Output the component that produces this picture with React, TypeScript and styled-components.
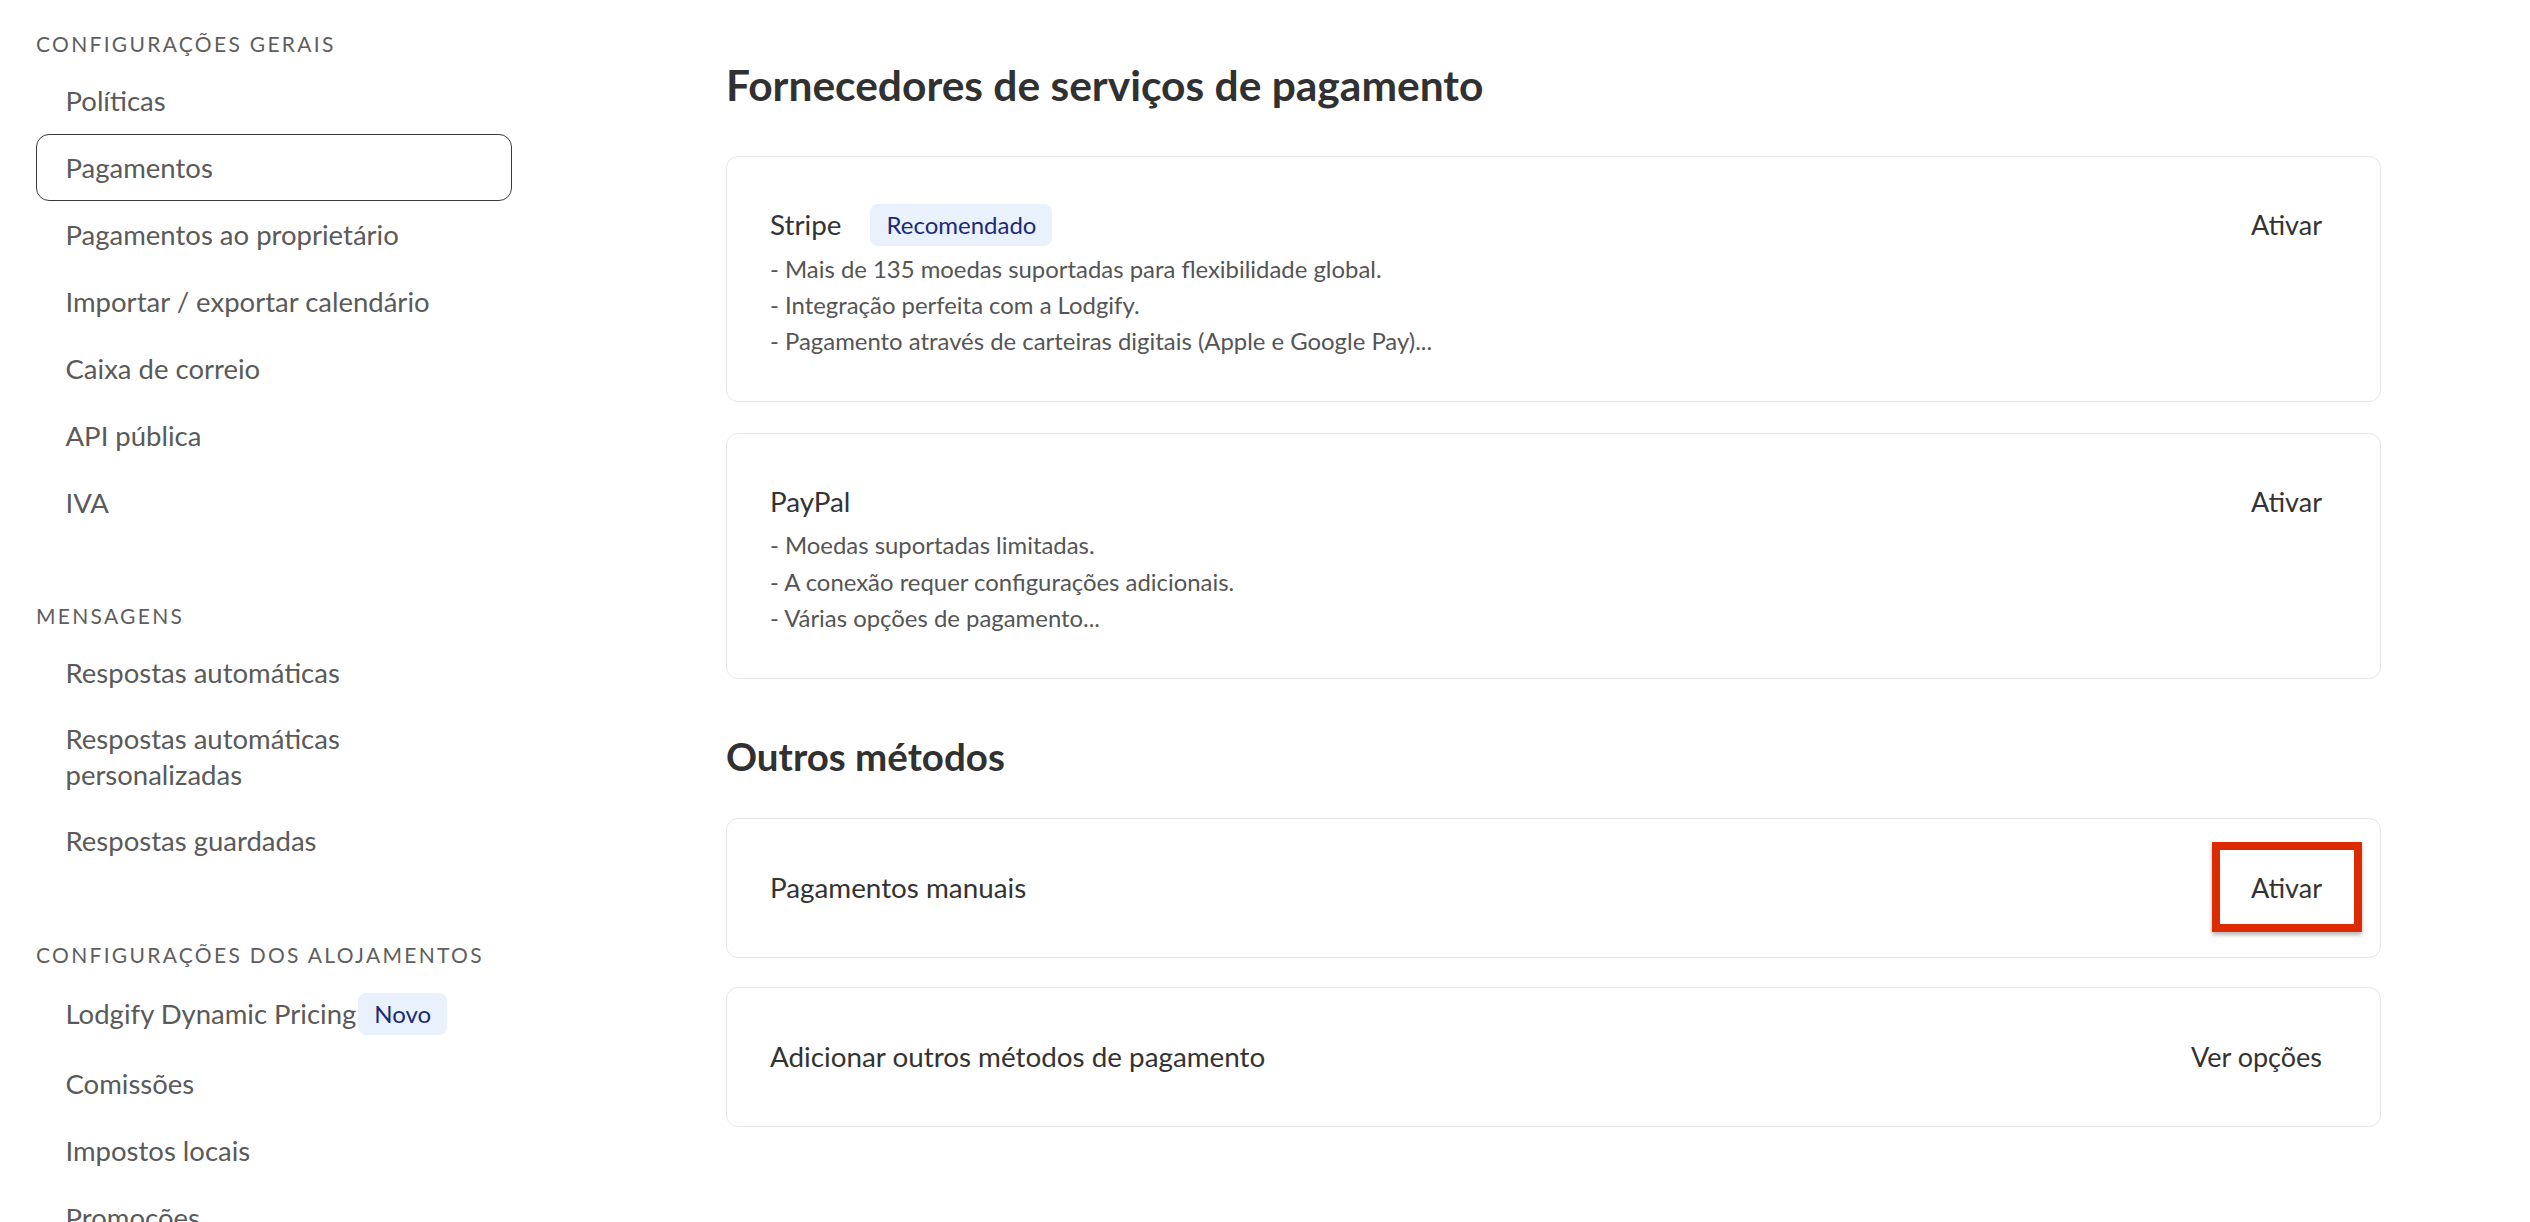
import React from "react";
import styled, { createGlobalStyle } from "styled-components";

const GlobalStyle = createGlobalStyle`
  html, body { margin: 0; padding: 0; background: #ffffff; }
  body {
    font-family: Lato, "Open Sans", "Liberation Sans", sans-serif;
    -webkit-font-smoothing: antialiased;
    overflow: hidden;
  }
  * { box-sizing: border-box; }
`;

const Page = styled.div`
  display: flex;
  align-items: flex-start;
  width: 2530px;
  height: 1222px;
  overflow: hidden;
  padding-left: 36px;
`;

const Sidebar = styled.nav`
  width: 476px;
  flex-shrink: 0;
  display: flex;
  flex-direction: column;
  padding-top: 30px;
`;

const Group = styled.div`
  display: flex;
  flex-direction: column;
  & + & {
    margin-top: 66px;
  }
`;

const GroupLabel = styled.div`
  font-size: 21px;
  line-height: 28px;
  letter-spacing: 2.3px;
  text-transform: uppercase;
  color: #5e5e5e;
  margin-bottom: 9px;
`;

const NavItem = styled.a<{ $active?: boolean }>`
  display: flex;
  align-items: center;
  gap: 2px;
  padding: 14.25px 28.5px;
  min-height: 67px;
  font-size: 27.5px;
  line-height: 35.5px;
  color: #5a5a5a;
  text-decoration: none;
  border: 1.5px solid ${(p) => (p.$active ? "#3a3a3a" : "transparent")};
  border-radius: 13px;
  cursor: pointer;
`;

const NavText = styled.span`
  min-width: 0;
`;

const Badge = styled.span`
  display: inline-flex;
  align-items: center;
  flex-shrink: 0;
  height: 42px;
  padding: 0 16px;
  border-radius: 8px;
  background: #e9f1fd;
  color: #1c2a78;
  font-size: 24px;
  line-height: 42px;
  white-space: nowrap;
`;

const Main = styled.main`
  margin-left: 214px;
  width: 1655px;
  flex-shrink: 0;
  display: flex;
  flex-direction: column;
  padding-top: 60px;
`;

const SectionTitle = styled.h2<{ $spaced?: boolean }>`
  margin: ${(p) => (p.$spaced ? "52px 0 37px" : "0 0 46px")};
  font-size: ${(p) => (p.$spaced ? "38.5px" : "42.5px")};
  line-height: 50px;
  font-weight: 700;
  color: #313131;
`;

const CardList = styled.div<{ $gap: number }>`
  display: flex;
  flex-direction: column;
  gap: ${(p) => p.$gap}px;
`;

const Card = styled.div<{ $compact?: boolean }>`
  display: flex;
  justify-content: space-between;
  align-items: ${(p) => (p.$compact ? "center" : "flex-start")};
  min-height: ${(p) => (p.$compact ? "140px" : "0")};
  padding: ${(p) => (p.$compact ? "0 58px 0 43px" : "47px 58px 41.5px 43px")};
  border: 1.5px solid #e7e7e7;
  border-radius: 12px;
  background: #ffffff;
`;

const CardBody = styled.div`
  display: flex;
  flex-direction: column;
`;

const TitleRow = styled.div`
  display: flex;
  align-items: center;
  gap: 29px;
  min-height: 42px;
  margin-bottom: 4.5px;
`;

const CardTitle = styled.span`
  font-size: 27.8px;
  line-height: 42px;
  color: #333333;
`;

const Bullets = styled.ul`
  margin: 0;
  padding: 0;
  list-style: none;
`;

const Bullet = styled.li`
  font-size: 23.9px;
  line-height: 36.3px;
  color: #555555;
`;

const Action = styled.button<{ $highlight?: boolean }>`
  position: relative;
  flex-shrink: 0;
  padding: 0;
  border: none;
  background: transparent;
  font-family: inherit;
  font-size: 27px;
  line-height: 42px;
  color: #333333;
  cursor: pointer;

  ${(p) =>
    p.$highlight &&
    `
    &::after {
      content: "";
      position: absolute;
      top: -25px;
      bottom: -23px;
      left: -39px;
      right: -40px;
      border: 8px solid #dc2b02;
      box-shadow: 0 3px 4px rgba(0, 0, 0, 0.28);
      pointer-events: none;
    }
  `}
`;

type Item = { label: string; active?: boolean; badge?: string };
type Section = { title: string; items: Item[] };

const sections: Section[] = [
  {
    title: "Configurações gerais",
    items: [
      { label: "Políticas" },
      { label: "Pagamentos", active: true },
      { label: "Pagamentos ao proprietário" },
      { label: "Importar / exportar calendário" },
      { label: "Caixa de correio" },
      { label: "API pública" },
      { label: "IVA" },
    ],
  },
  {
    title: "Mensagens",
    items: [
      { label: "Respostas automáticas" },
      { label: "Respostas automáticas personalizadas" },
      { label: "Respostas guardadas" },
    ],
  },
  {
    title: "Configurações dos alojamentos",
    items: [
      { label: "Lodgify Dynamic Pricing", badge: "Novo" },
      { label: "Comissões" },
      { label: "Impostos locais" },
      { label: "Promoções" },
    ],
  },
];

type Provider = { name: string; badge?: string; bullets: string[] };

const providers: Provider[] = [
  {
    name: "Stripe",
    badge: "Recomendado",
    bullets: [
      "- Mais de 135 moedas suportadas para flexibilidade global.",
      "- Integração perfeita com a Lodgify.",
      "- Pagamento através de carteiras digitais (Apple e Google Pay)...",
    ],
  },
  {
    name: "PayPal",
    bullets: [
      "- Moedas suportadas limitadas.",
      "- A conexão requer configurações adicionais.",
      "- Várias opções de pagamento...",
    ],
  },
];

export default function App() {
  return (
    <>
      <GlobalStyle />
      <Page>
        <Sidebar>
          {sections.map((s) => (
            <Group key={s.title}>
              <GroupLabel>{s.title}</GroupLabel>
              {s.items.map((it) => (
                <NavItem key={it.label} $active={it.active}>
                  <NavText>{it.label}</NavText>
                  {it.badge && <Badge>{it.badge}</Badge>}
                </NavItem>
              ))}
            </Group>
          ))}
        </Sidebar>
        <Main>
          <SectionTitle>Fornecedores de serviços de pagamento</SectionTitle>
          <CardList $gap={31}>
            {providers.map((p) => (
              <Card key={p.name}>
                <CardBody>
                  <TitleRow>
                    <CardTitle>{p.name}</CardTitle>
                    {p.badge && <Badge>{p.badge}</Badge>}
                  </TitleRow>
                  <Bullets>
                    {p.bullets.map((b) => (
                      <Bullet key={b}>{b}</Bullet>
                    ))}
                  </Bullets>
                </CardBody>
                <Action>Ativar</Action>
              </Card>
            ))}
          </CardList>
          <SectionTitle $spaced>Outros métodos</SectionTitle>
          <CardList $gap={29}>
            <Card $compact>
              <CardTitle>Pagamentos manuais</CardTitle>
              <Action $highlight>Ativar</Action>
            </Card>
            <Card $compact>
              <CardTitle>Adicionar outros métodos de pagamento</CardTitle>
              <Action>Ver opções</Action>
            </Card>
          </CardList>
        </Main>
      </Page>
    </>
  );
}
